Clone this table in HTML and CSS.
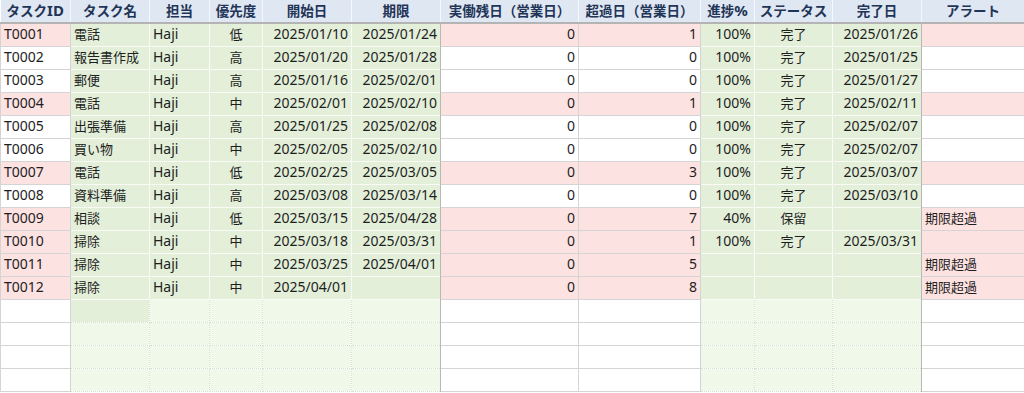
FILE: index.html
```html
<!DOCTYPE html>
<html lang="ja">
<head>
<meta charset="utf-8">
<link rel="stylesheet" href="styles.css">
</head>
<body>
<table class="sheet">
<colgroup>
<col class="w70"><col class="w79"><col class="w60"><col class="w53"><col class="w89"><col class="w89"><col class="w138"><col class="w122"><col class="w54"><col class="w78"><col class="w89"><col class="w103">
</colgroup>
<thead>
<tr><th>タスク<span class="lat">ID</span></th><th>タスク名</th><th>担当</th><th>優先度</th><th>開始日</th><th>期限</th><th>実働残日（営業日）</th><th>超過日（営業日）</th><th>進捗<span class="lat">%</span></th><th>ステータス</th><th>完了日</th><th>アラート</th></tr>
</thead>
<tbody>
<tr class="pink"><td class="id">T0001</td><td class="g gl jp">電話</td><td class="g">Haji</td><td class="g c jp">低</td><td class="g r">2025/01/10</td><td class="g r gr">2025/01/24</td><td class="n">0</td><td class="n">1</td><td class="g r gl">100%</td><td class="g c jp">完了</td><td class="g r gr">2025/01/26</td><td class="al jp"></td></tr>
<tr><td class="id">T0002</td><td class="g gl jp">報告書作成</td><td class="g">Haji</td><td class="g c jp">高</td><td class="g r">2025/01/20</td><td class="g r gr">2025/01/28</td><td class="n">0</td><td class="n">0</td><td class="g r gl">100%</td><td class="g c jp">完了</td><td class="g r gr">2025/01/25</td><td class="al jp"></td></tr>
<tr><td class="id">T0003</td><td class="g gl jp">郵便</td><td class="g">Haji</td><td class="g c jp">高</td><td class="g r">2025/01/16</td><td class="g r gr">2025/02/01</td><td class="n">0</td><td class="n">0</td><td class="g r gl">100%</td><td class="g c jp">完了</td><td class="g r gr">2025/01/27</td><td class="al jp"></td></tr>
<tr class="pink"><td class="id">T0004</td><td class="g gl jp">電話</td><td class="g">Haji</td><td class="g c jp">中</td><td class="g r">2025/02/01</td><td class="g r gr">2025/02/10</td><td class="n">0</td><td class="n">1</td><td class="g r gl">100%</td><td class="g c jp">完了</td><td class="g r gr">2025/02/11</td><td class="al jp"></td></tr>
<tr><td class="id">T0005</td><td class="g gl jp">出張準備</td><td class="g">Haji</td><td class="g c jp">高</td><td class="g r">2025/01/25</td><td class="g r gr">2025/02/08</td><td class="n">0</td><td class="n">0</td><td class="g r gl">100%</td><td class="g c jp">完了</td><td class="g r gr">2025/02/07</td><td class="al jp"></td></tr>
<tr><td class="id">T0006</td><td class="g gl jp">買い物</td><td class="g">Haji</td><td class="g c jp">中</td><td class="g r">2025/02/05</td><td class="g r gr">2025/02/10</td><td class="n">0</td><td class="n">0</td><td class="g r gl">100%</td><td class="g c jp">完了</td><td class="g r gr">2025/02/07</td><td class="al jp"></td></tr>
<tr class="pink"><td class="id">T0007</td><td class="g gl jp">電話</td><td class="g">Haji</td><td class="g c jp">低</td><td class="g r">2025/02/25</td><td class="g r gr">2025/03/05</td><td class="n">0</td><td class="n">3</td><td class="g r gl">100%</td><td class="g c jp">完了</td><td class="g r gr">2025/03/07</td><td class="al jp"></td></tr>
<tr><td class="id">T0008</td><td class="g gl jp">資料準備</td><td class="g">Haji</td><td class="g c jp">高</td><td class="g r">2025/03/08</td><td class="g r gr">2025/03/14</td><td class="n">0</td><td class="n">0</td><td class="g r gl">100%</td><td class="g c jp">完了</td><td class="g r gr">2025/03/10</td><td class="al jp"></td></tr>
<tr class="pink"><td class="id">T0009</td><td class="g gl jp">相談</td><td class="g">Haji</td><td class="g c jp">低</td><td class="g r">2025/03/15</td><td class="g r gr">2025/04/28</td><td class="n">0</td><td class="n">7</td><td class="g r gl">40%</td><td class="g c jp">保留</td><td class="g r gr"></td><td class="al jp">期限超過</td></tr>
<tr class="pink"><td class="id">T0010</td><td class="g gl jp">掃除</td><td class="g">Haji</td><td class="g c jp">中</td><td class="g r">2025/03/18</td><td class="g r gr">2025/03/31</td><td class="n">0</td><td class="n">1</td><td class="g r gl">100%</td><td class="g c jp">完了</td><td class="g r gr">2025/03/31</td><td class="al jp"></td></tr>
<tr class="pink"><td class="id">T0011</td><td class="g gl jp">掃除</td><td class="g">Haji</td><td class="g c jp">中</td><td class="g r">2025/03/25</td><td class="g r gr">2025/04/01</td><td class="n">0</td><td class="n">5</td><td class="g r gl"></td><td class="g c jp"></td><td class="g r gr"></td><td class="al jp">期限超過</td></tr>
<tr class="pink"><td class="id">T0012</td><td class="g gl jp">掃除</td><td class="g">Haji</td><td class="g c jp">中</td><td class="g r">2025/04/01</td><td class="g r gr"></td><td class="n">0</td><td class="n">8</td><td class="g r gl"></td><td class="g c jp"></td><td class="g r gr"></td><td class="al jp">期限超過</td></tr>
<tr class="empty"><td class="id"></td><td class="g gl dark"></td><td class="g"></td><td class="g"></td><td class="g"></td><td class="g gr"></td><td class="n"></td><td class="n"></td><td class="g gl"></td><td class="g"></td><td class="g gr"></td><td class="al"></td></tr>
<tr class="empty"><td class="id"></td><td class="g gl"></td><td class="g"></td><td class="g"></td><td class="g"></td><td class="g gr"></td><td class="n"></td><td class="n"></td><td class="g gl"></td><td class="g"></td><td class="g gr"></td><td class="al"></td></tr>
<tr class="empty"><td class="id"></td><td class="g gl"></td><td class="g"></td><td class="g"></td><td class="g"></td><td class="g gr"></td><td class="n"></td><td class="n"></td><td class="g gl"></td><td class="g"></td><td class="g gr"></td><td class="al"></td></tr>
<tr class="empty"><td class="id"></td><td class="g gl"></td><td class="g"></td><td class="g"></td><td class="g"></td><td class="g gr"></td><td class="n"></td><td class="n"></td><td class="g gl"></td><td class="g"></td><td class="g gr"></td><td class="al"></td></tr>
</tbody>
</table>
</body>
</html>
```

FILE: styles.css
```css
html, body {
  margin: 0;
  padding: 0;
  background: #ffffff;
}
.sheet {
  border-collapse: collapse;
  table-layout: fixed;
  width: 1024px;
  font-family: "Noto Sans", "Noto Sans CJK JP", sans-serif;
  font-size: 14px;
  color: #1e1e1e;
}
.w70 { width: 70px; }
.w79 { width: 79px; }
.w60 { width: 60px; }
.w53 { width: 53px; }
.w89 { width: 89px; }
.w138 { width: 138px; }
.w122 { width: 122px; }
.w54 { width: 54px; }
.w78 { width: 78px; }
.w103 { width: 103px; }

.sheet th {
  height: 21px;
  padding: 0 2px;
  background: #dfe7f2;
  color: #1f3557;
  font-size: 13.5px;
  font-weight: bold;
  text-align: center;
  white-space: nowrap;
  overflow: hidden;
  border-right: 1px solid #f4f7fb;
  border-bottom: 2px solid #b4b4b4;
  line-height: 21px;
}
.sheet th .lat {
  font-size: 15px;
}
.sheet td {
  height: 20px;
  padding: 0 3px 2px;
  white-space: nowrap;
  overflow: hidden;
  line-height: 20px;
  border: 1px solid #d4d4d4;
  background: #ffffff;
}
.sheet td.jp { font-size: 13px; }
.sheet td.g {
  background: #e3efd9;
  border: 1px dotted #f3f7ef;
}
.sheet td.gl { border-left: 1px solid #b8b8b8; }
.sheet td.gr { border-right: 1px solid #b8b8b8; }
.sheet td.c { text-align: center; }
.sheet td.r { text-align: right; }
.sheet td.n { text-align: right; padding-right: 3px; }
.sheet td.id { padding-left: 3px; }
.sheet td.al { padding-left: 3px; }

.pink td.id,
.pink td.n,
.pink td.al { background: #fde2e2; }

.empty td.g {
  background: #f0f8e9;
  border: 1px dotted #d9ded3;
}
.empty td.gl { border-left: 1px solid #b8b8b8; }
.empty td.gr { border-right: 1px solid #b8b8b8; }
.empty td.dark { background: #e3efd9; }
```
